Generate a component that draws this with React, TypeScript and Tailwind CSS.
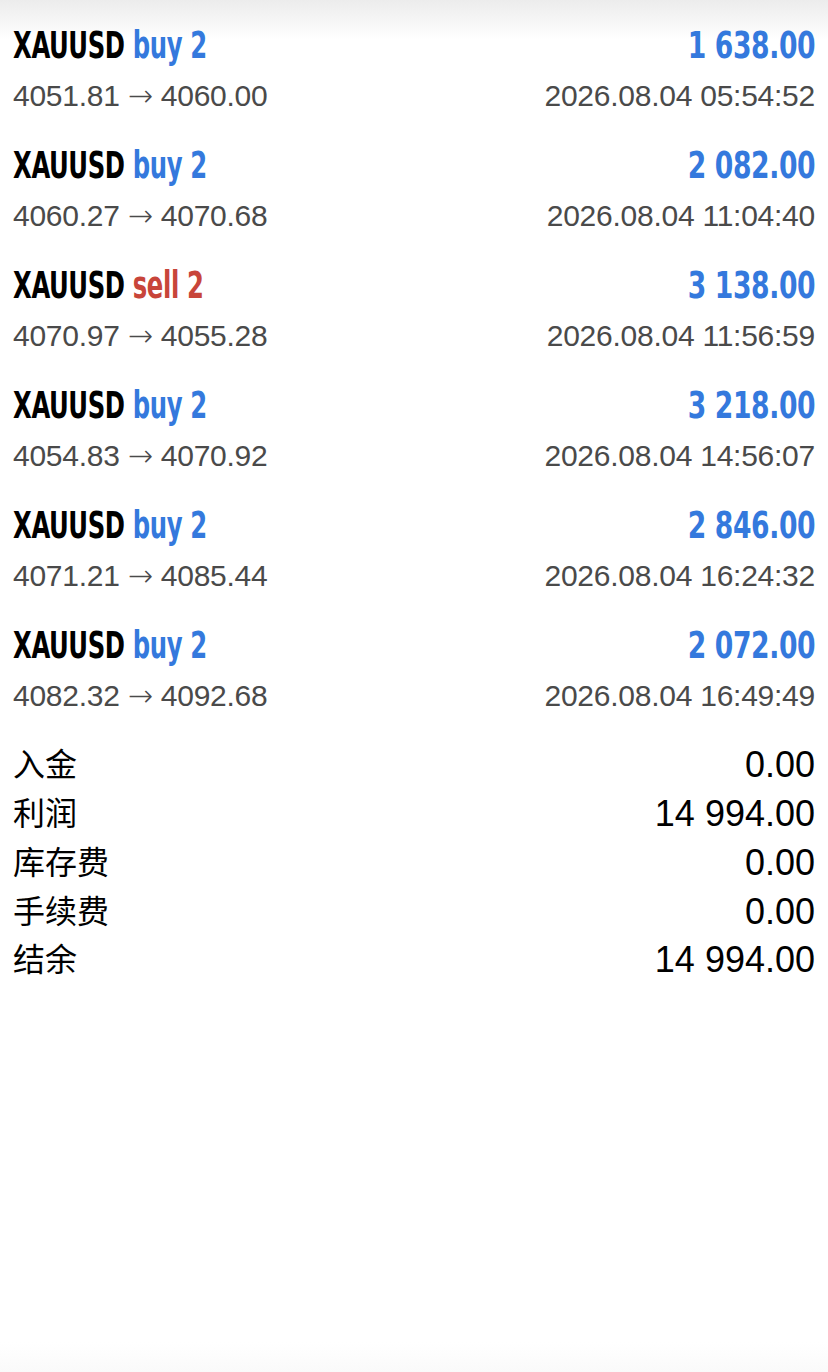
const trades = [
  { side: "buy", vol: 2, open: "4051.81", close: "4060.00", profit: "1 638.00", time: "2026.08.04 05:54:52" },
  { side: "buy", vol: 2, open: "4060.27", close: "4070.68", profit: "2 082.00", time: "2026.08.04 11:04:40" },
  { side: "sell", vol: 2, open: "4070.97", close: "4055.28", profit: "3 138.00", time: "2026.08.04 11:56:59" },
  { side: "buy", vol: 2, open: "4054.83", close: "4070.92", profit: "3 218.00", time: "2026.08.04 14:56:07" },
  { side: "buy", vol: 2, open: "4071.21", close: "4085.44", profit: "2 846.00", time: "2026.08.04 16:24:32" },
  { side: "buy", vol: 2, open: "4082.32", close: "4092.68", profit: "2 072.00", time: "2026.08.04 16:49:49" },
];

const summary = [
  { label: "入金", value: "0.00" },
  { label: "利润", value: "14 994.00" },
  { label: "库存费", value: "0.00" },
  { label: "手续费", value: "0.00" },
  { label: "结余", value: "14 994.00" },
];

const App = () => {
  return (
    <div className="relative w-[828px] h-[1372px] bg-white overflow-hidden">
      {/* top / bottom soft shading */}
      <div className="absolute top-0 left-0 w-full h-[40px] bg-gradient-to-b from-[#ececec] to-white/0" />
      <div className="absolute bottom-0 left-0 w-full h-[30px] bg-gradient-to-t from-[#fafafa] to-white/0" />

      <div className="relative pt-[21px] px-[13px] font-['Liberation_Sans',Arial,sans-serif]">
        {trades.map((t, i) => (
          <div key={i} className="pb-[20px]">
            <div className="flex justify-between items-center h-[50px] font-['DejaVu_Sans_Condensed','DejaVu_Sans',sans-serif] font-bold text-[37px] tracking-[-0.5px]">
              <div className="inline-block whitespace-nowrap origin-left scale-x-[0.73]">
                <span className="text-black">XAUUSD</span>{" "}
                <span className={t.side === "buy" ? "text-[#3479dd]" : "text-[#c8453a]"}>
                  {t.side} {t.vol}
                </span>
              </div>
              <div className="inline-block whitespace-nowrap origin-right scale-x-[0.8] text-[#3479dd]">{t.profit}</div>
            </div>
            <div className="flex justify-between items-center h-[50px] pb-[2px] text-[30px] tracking-[-0.25px] text-[#4a4a4a]">
              <div>
                {t.open} <span className="font-['DejaVu_Sans',sans-serif] font-light">→</span> {t.close}
              </div>
              <div>{t.time}</div>
            </div>
          </div>
        ))}

        <div className="font-['Liberation_Sans','Noto_Sans_CJK_SC',sans-serif] text-black">
          {summary.map((s) => (
            <div key={s.label} className="flex justify-between items-center h-[48.75px]">
              <div className="text-[32px]">{s.label}</div>
              <div className="text-[36px]">{s.value}</div>
            </div>
          ))}
        </div>
      </div>
    </div>
  );
};

export default App;
